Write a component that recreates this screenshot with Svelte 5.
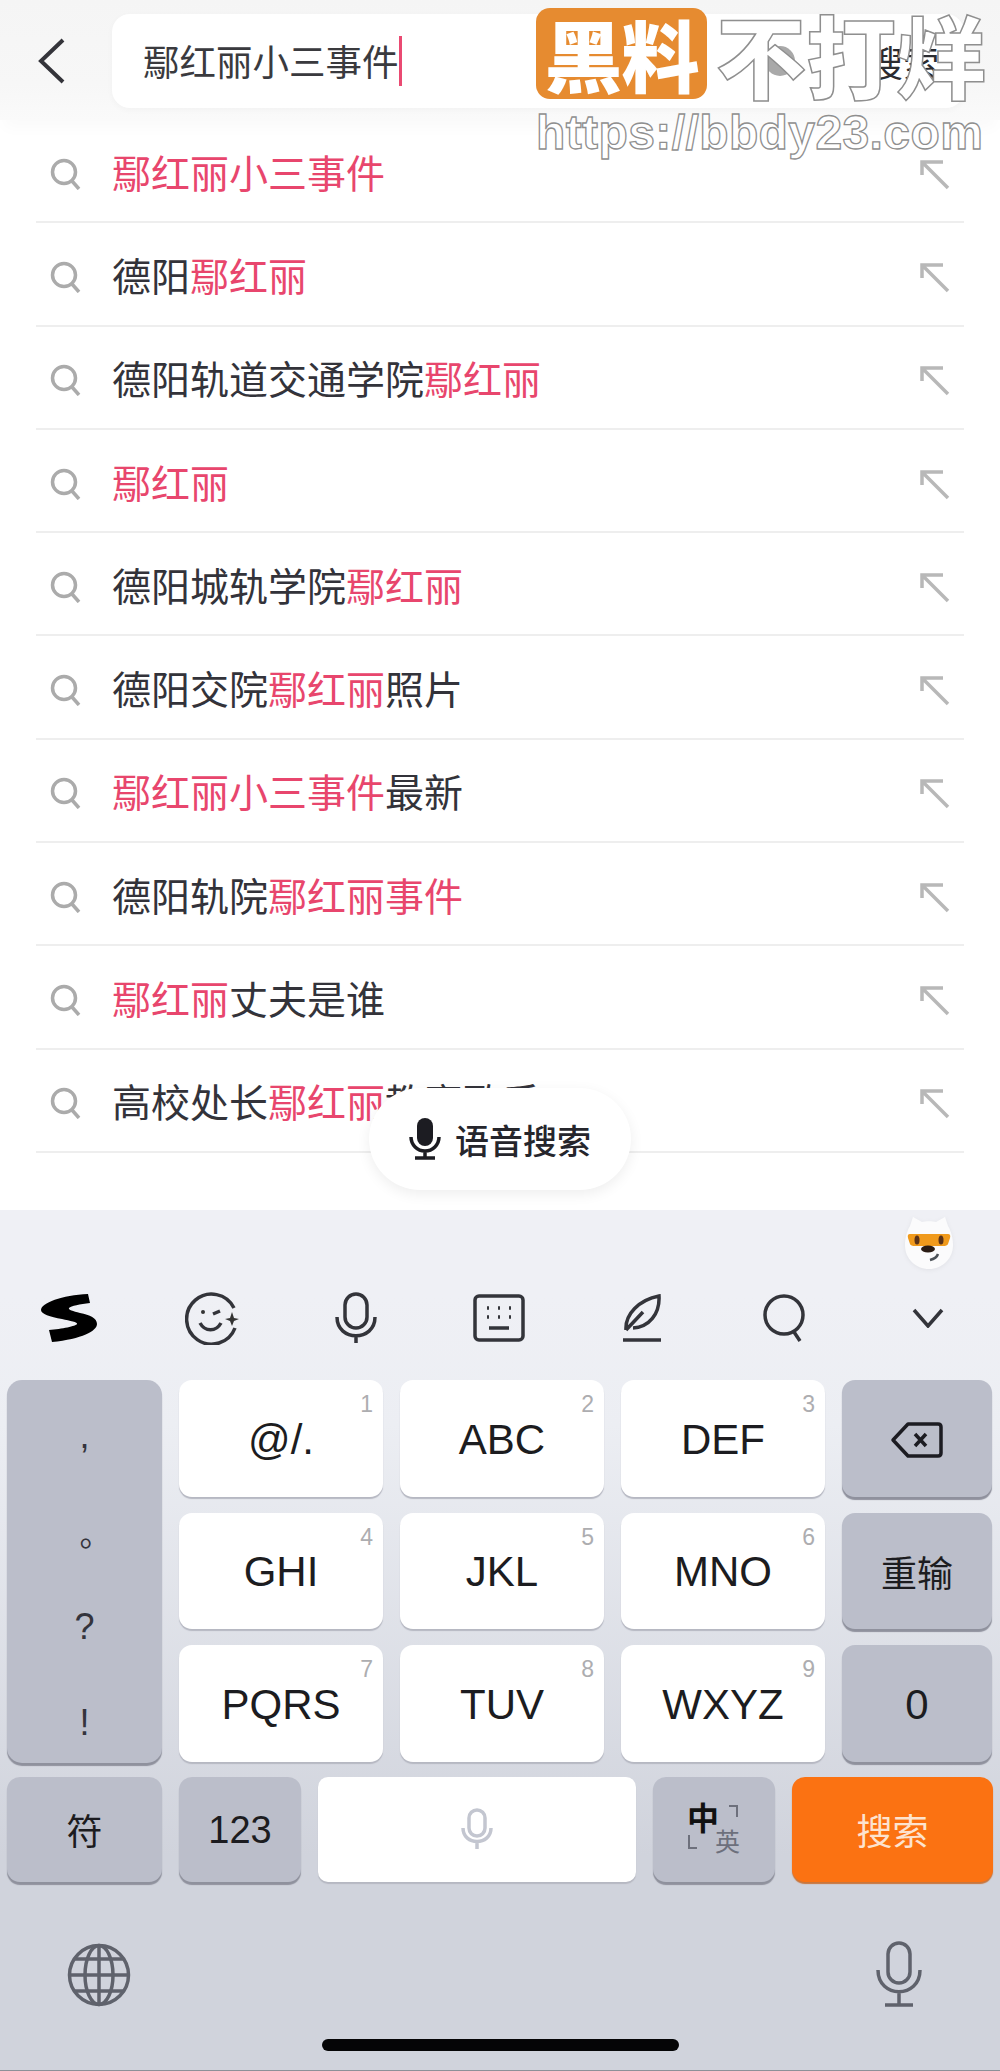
<script>
  const name = '鄢红丽';
  // each row: [text, highlighted] segments
  const rows = [
    [[name + '小三事件', true]],
    [['德阳', false], [name, true]],
    [['德阳轨道交通学院', false], [name, true]],
    [[name, true]],
    [['德阳城轨学院', false], [name, true]],
    [['德阳交院', false], [name, true], ['照片', false]],
    [[name + '小三事件', true], ['最新', false]],
    [['德阳轨院', false], [name + '事件', true]],
    [[name, true], ['丈夫是谁', false]],
    [['高校处长', false], [name, true], ['教案歌手', false]],
  ];
  const keys = [
    ['@/.', '1'], ['ABC', '2'], ['DEF', '3'],
    ['GHI', '4'], ['JKL', '5'], ['MNO', '6'],
    ['PQRS', '7'], ['TUV', '8'], ['WXYZ', '9'],
  ];
</script>

<main>
  <header>
    <svg class="back" width="28" height="46" viewBox="0 0 28 46"><path d="M25 2 L3 23 L25 44" /></svg>
    <div class="box">
      <span class="query">{name}小三事件</span><i class="caret"></i>
      <span class="clear"></span>
      <span class="go">搜索</span>
    </div>
  </header>

  <ul>
    {#each rows as row}
      <li>
        <svg class="lens" width="32" height="32" viewBox="0 0 32 32"><circle cx="14" cy="14" r="11.5" /><path d="M22 23 L29 31" /></svg>
        <span class="label">{#each row as seg}<span class:hit={seg[1]}>{seg[0]}</span>{/each}</span>
        <svg class="up" width="30" height="30" viewBox="0 0 30 30"><path d="M2 15 V2 H23 M2 2 L28 28" /></svg>
      </li>
    {/each}
  </ul>

  <div class="voice">
    <svg width="32" height="42" viewBox="0 0 32 42"><rect x="8" y="0" width="16" height="28" rx="8" fill="#1c1c22" /><path d="M2 19 A14 14 0 0 0 30 19 M16 33 V40 M6 40 H26" fill="none" stroke="#1c1c22" stroke-width="3.5" /></svg>
    <span>语音搜索</span>
  </div>

  <section class="keyboard">
    <div class="tools">
      <svg width="60" height="50" viewBox="0 0 60 50"><path d="M48 1 L50 10 C40 11 31 13 29 15 C28 17 33 18 40 20 C50 22 57 25 57 31 C57 38 42 46 12 49 L9 37 C22 36 36 33 37 31 C38 29 30 28 22 26 C10 24 1 21 1 17 C1 10 22 2 48 1 Z" fill="#000" /></svg>
      <svg class="line" width="56" height="54" viewBox="0 0 56 54"><path d="M49 17 A25 25 0 1 0 50 37" /><circle cx="18" cy="21" r="2" fill="#333" stroke="none" /><path d="M28 23 L35 20 M15 32 C20 41 31 41 36 32" /><path d="M47 21 L49 27 L54 28 L49 30 L47 35 L45 30 L40 28 L45 27 Z" fill="#333" stroke="none" /></svg>
      <svg class="line" width="42" height="52" viewBox="0 0 42 52"><rect x="10" y="2" width="22" height="34" rx="11" /><path d="M2 25 C2 50 40 50 40 25 M21 43 V51" /></svg>
      <svg class="line" width="52" height="48" viewBox="0 0 52 48"><rect x="2" y="2" width="48" height="44" rx="4" /><path d="M14 14 h2 M25 14 h2 M36 14 h2 M14 23 h2 M25 23 h2 M36 23 h2 M16 34 H36" /></svg>
      <svg class="line" width="42" height="48" viewBox="0 0 42 48"><path d="M5 36 C4 20 18 6 38 2 C39 20 28 33 12 34 M5 36 L22 18 M2 46 H40" /></svg>
      <svg class="line" width="46" height="48" viewBox="0 0 46 48"><circle cx="22" cy="21" r="19" /><path d="M32 38 L38 47" /></svg>
      <svg class="line" width="32" height="20" viewBox="0 0 32 20"><path d="M2 2 L16 18 L30 2" /></svg>
    </div>

    <div class="pad">
      <div class="key dim side">
        <span>,</span><span class="dot">。</span><span>?</span><span>!</span>
      </div>
      {#each keys as k, i}
        <div class="key" style="grid-row: {Math.floor(i / 3) + 1}; grid-column: {i % 3 + 2}">
          {k[0]}<small>{k[1]}</small>
        </div>
      {/each}
      <div class="key dim" style="grid-row: 1; grid-column: 5">
        <svg width="54" height="38" viewBox="0 0 54 38"><path d="M18 3 H48 Q51 3 51 6 V32 Q51 35 48 35 H18 L3 19 Z" fill="none" stroke="#1c1c22" stroke-width="3.5" stroke-linejoin="round" /><path d="M25 13 L36 25 M36 13 L25 25" stroke="#1c1c22" stroke-width="3.5" /></svg>
      </div>
      <div class="key dim cjk" style="grid-row: 2; grid-column: 5">重输</div>
      <div class="key dim" style="grid-row: 3; grid-column: 5">0</div>
    </div>

    <div class="bottom-row">
      <div class="key dim cjk w154">符</div>
      <div class="key dim w122 num">123</div>
      <div class="key space">
        <svg class="line pale" width="32" height="42" viewBox="0 0 32 42"><rect x="8" y="2" width="16" height="26" rx="8" /><path d="M2 20 C2 38 30 38 30 20 M16 33 V41" /></svg>
      </div>
      <div class="key dim w122 lang">
        <b>中</b><em>英</em>
        <svg width="70" height="54" viewBox="0 0 70 54"><path d="M53 3 H61 V14 M13 32 V45 H21" fill="none" stroke="#6d707c" stroke-width="2" /></svg>
      </div>
      <div class="key go-key">搜索</div>
    </div>

    <div class="sys">
      <svg class="sys-icon" width="64" height="64" viewBox="0 0 64 64"><circle cx="32" cy="32" r="29.5" /><ellipse cx="32" cy="32" rx="14" ry="29.5" /><path d="M32 2 V62 M3 32 H61 M8 16 H56 M8 48 H56" /></svg>
      <svg class="sys-icon" width="46" height="66" viewBox="0 0 46 66"><rect x="12" y="2" width="22" height="40" rx="11" /><path d="M2 29 C2 58 44 58 44 29 M23 50 V64 M9 64 H37" /></svg>
    </div>
    <div class="home"></div>

    <div class="fox">
      <svg width="50" height="54" viewBox="0 0 50 54">
        <path d="M6 10 L9 1 L18 6 C22 5 28 5 32 6 L41 1 L44 10 C48 17 49 24 49 29 C49 43 38 53 25 53 C12 53 1 43 1 29 C1 24 2 17 6 10 Z" fill="#fbfbfc" />
        <path d="M6 18 H44 Q47 18 46 22 L44 28 Q43 30 39 30 H11 Q7 30 6 28 L4 22 Q3 18 6 18 Z" fill="#f09a1c" />
        <ellipse cx="13" cy="24" rx="2.5" ry="4.5" fill="#5a3218" /><ellipse cx="37" cy="24" rx="2.5" ry="4.5" fill="#5a3218" />
        <ellipse cx="24" cy="33" rx="7" ry="3.5" fill="#2a1c14" />
        <path d="M34 38 C33 41 30 43 26 44" fill="none" stroke="#4c5258" stroke-width="2.5" />
      </svg>
    </div>
  </section>

  <div class="mark">
    <div class="mark-top">
      <span class="badge">黑料</span>
      <span class="slogan">不打烊</span>
    </div>
    <div class="url">https://bbdy23.com</div>
  </div>
</main>

<style>
  :global(body) {
    margin: 0;
    background: #fff;
  }

  main {
    position: relative;
    width: 1000px;
    height: 2071px;
    overflow: hidden;
    font-family: "Noto Sans CJK SC", "Noto Sans", sans-serif;
    color: #2b2b2f;
  }

  header {
    position: relative;
    height: 120px;
    box-sizing: border-box;
    padding: 14px 36px 12px 38px;
    display: flex;
    gap: 46px;
    background: linear-gradient(#f5f5f5, #f7f7f7 70%, #fafafa);
    box-shadow: 0 12px 14px -4px #fafafa;
  }

  .back {
    margin-top: 24px;
    fill: none;
    stroke: #34343a;
    stroke-width: 4;
  }

  .box {
    flex: 1;
    height: 94px;
    box-sizing: border-box;
    padding-left: 31px;
    display: flex;
    align-items: center;
    background: #fff;
    border-radius: 18px;
    box-shadow: 0 2px 6px rgba(0, 0, 0, 0.03);
  }

  .query {
    font-size: 36.5px;
    color: #3a3a3e;
    line-height: 50px;
    white-space: nowrap;
  }

  .caret {
    width: 3px;
    height: 50px;
    background: #ea4a72;
  }

  .clear {
    width: 30px;
    height: 30px;
    margin-left: auto;
    border-radius: 50%;
    background: #a9a9a9;
  }

  .go {
    margin: 0 25px 0 72px;
    font-size: 36px;
    color: #2b2b2f;
    white-space: nowrap;
  }

  ul {
    list-style: none;
    margin: 0 36px;
    padding: 0;
  }

  li {
    height: 103.3px;
    box-sizing: border-box;
    border-bottom: 2px solid #eeeeee;
    padding: 0 14px;
    display: flex;
    align-items: center;
  }

  .lens {
    margin-top: 6px;
    fill: none;
    stroke: #ababab;
    stroke-width: 3.5;
  }

  .label {
    margin-left: 30px;
    font-size: 39px;
    line-height: 50px;
    color: #33333a;
  }

  .hit {
    color: #e8466d;
  }

  .up {
    margin-left: auto;
    margin-top: 8px;
    fill: none;
    stroke: #b8b8b8;
    stroke-width: 3.5;
  }

  .voice {
    position: absolute;
    left: 369px;
    top: 1088px;
    width: 262px;
    height: 102px;
    border-radius: 51px;
    background: #fff;
    box-shadow: 0 4px 14px rgba(0, 0, 0, 0.07);
    display: flex;
    align-items: center;
    justify-content: center;
    gap: 14px;
    font-size: 34px;
    font-weight: 500;
    color: #26262c;
  }

  .keyboard {
    position: absolute;
    left: 0;
    top: 1210px;
    width: 1000px;
    height: 861px;
    box-sizing: border-box;
    padding-top: 53px;
    background: linear-gradient(#eff0f5 10%, #eceef3 25%, #d0d3dc 75%);
    border-bottom: 1px solid #8e9098;
  }

  .tools {
    display: grid;
    grid-template-columns: repeat(7, 143px);
    height: 110px;
    margin: 0 0 7px -2px;
    align-items: center;
    justify-items: center;
  }

  .line {
    fill: none;
    stroke: #33343a;
    stroke-width: 3.5;
  }

  .pad {
    display: grid;
    grid-template-columns: 155px 204px 204px 204px 150px;
    grid-template-rows: repeat(3, 116.5px);
    column-gap: 17px;
    row-gap: 16px;
    margin: 0 7px 0 7px;
  }

  .key {
    position: relative;
    box-sizing: border-box;
    padding-top: 3px;
    display: flex;
    align-items: center;
    justify-content: center;
    background: #fff;
    border-radius: 13px;
    box-shadow: 0 2px 1px #b6b8c2;
    font-family: "Liberation Sans", sans-serif;
    font-size: 42px;
    color: #1c1c20;
  }

  .key small {
    position: absolute;
    top: 11px;
    right: 10px;
    font-size: 23px;
    color: #adadb0;
  }

  .dim {
    background: #bbbeca;
    box-shadow: 0 3px 1px #8f919d;
  }

  .side {
    grid-row: 1 / 4;
    grid-column: 1;
    flex-direction: column;
    justify-content: space-between;
    padding: 26px 0 10px;
    font-size: 36px;
    font-weight: 400;
    color: #34343c;
    line-height: 60px;
    margin-bottom: -1px;
    border-radius: 15px;
  }

  .dot {
    font-family: "Noto Sans CJK SC", sans-serif;
    font-size: 32px;
    transform: translate(11px, 0);
  }

  .cjk {
    padding-top: 0;
    font-family: "Noto Sans CJK SC", sans-serif;
    font-size: 36px;
  }

  .bottom-row {
    display: flex;
    gap: 17px;
    margin: 15px 7px 0 7px;
    height: 105px;
  }

  .w154 {
    width: 155px;
  }

  .w122 {
    width: 122px;
  }

  .num {
    font-size: 38px;
  }

  .space {
    width: 318px;
    padding-top: 0;
    border-radius: 10px;
  }

  .pale {
    stroke: #c3c6d0;
  }

  .lang {
    font-family: "Noto Sans CJK SC", sans-serif;
  }

  .lang svg {
    position: absolute;
    left: 23px;
    top: 26px;
  }

  .lang b {
    position: absolute;
    left: 34px;
    top: 18px;
    font-size: 32px;
    line-height: 42px;
    color: #111;
  }

  .lang em {
    position: absolute;
    left: 62px;
    top: 48px;
    font-size: 25px;
    line-height: 30px;
    font-style: normal;
    color: #6d707c;
  }

  .go-key {
    flex: 1;
    padding-top: 0;
    background: #fb7212;
    box-shadow: 0 2px 1px #c9753b;
    font-family: "Noto Sans CJK SC", sans-serif;
    font-size: 36px;
    color: #fde3cf;
  }

  .sys {
    display: flex;
    justify-content: space-between;
    align-items: flex-end;
    height: 66px;
    margin-top: 59px;
    padding: 0 78px 0 67px;
  }

  .sys-icon {
    fill: none;
    stroke: #5f626c;
    stroke-width: 3.5;
  }

  .home {
    width: 357px;
    height: 12px;
    margin: 32px 0 0 322px;
    border-radius: 6px;
    background: #050506;
  }

  .fox {
    position: absolute;
    left: 904px;
    top: 6px;
    filter: drop-shadow(0 1px 2px rgba(0, 0, 0, 0.06));
  }

  .mark {
    position: absolute;
    left: 536px;
    top: 8px;
    width: 450px;
  }

  .mark-top {
    display: flex;
    align-items: center;
    gap: 9px;
  }

  .badge {
    width: 173px;
    height: 91px;
    border-radius: 14px;
    background: #e68b30;
    color: #fff;
    font-size: 78px;
    font-weight: 900;
    line-height: 91px;
    text-align: center;
    letter-spacing: -1px;
  }

  .slogan {
    font-size: 90px;
    line-height: 91px;
    font-weight: 900;
    color: #fff;
    -webkit-text-stroke: 1.5px #8f8f8f;
    white-space: nowrap;
  }

  .url {
    margin-top: 7px;
    font-family: "Liberation Sans", sans-serif;
    font-size: 48px;
    line-height: 54px;
    font-weight: 700;
    letter-spacing: 0.4px;
    color: #fff;
    -webkit-text-stroke: 1.3px #8f8f8f;
    white-space: nowrap;
  }
</style>
